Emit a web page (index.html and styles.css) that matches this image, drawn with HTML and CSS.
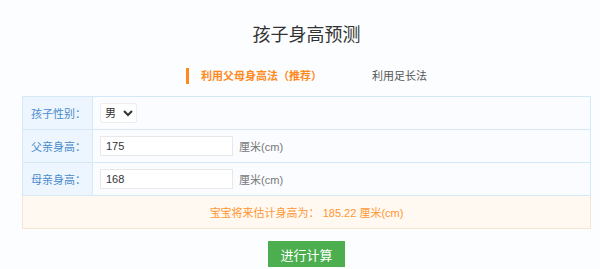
FILE: index.html
```html
<!DOCTYPE html>
<html lang="zh-CN">
  <head>
    <meta charset="UTF-8" />
    <title>孩子身高预测</title>
    <link rel="stylesheet" href="styles.css">
  </head>
  <body>
    <div class="wrap">
      <h1 class="title">孩子身高预测</h1>

      <div class="tabs">
        <span class="tab active">利用父母身高法（推荐）</span>
        <span class="tab">利用足长法</span>
      </div>

      <table class="calc-table">
        <tr>
          <th>孩子性别：</th>
          <td>
            <select class="sex-select">
              <option>男</option>
              <option>女</option>
            </select>
          </td>
        </tr>
        <tr>
          <th>父亲身高：</th>
          <td><input class="num-input" type="text" value="175"> <span class="unit">厘米(cm)</span></td>
        </tr>
        <tr>
          <th>母亲身高：</th>
          <td><input class="num-input" type="text" value="168"> <span class="unit">厘米(cm)</span></td>
        </tr>
        <tr class="result-row">
          <td colspan="2">宝宝将来估计身高为： 185.22 厘米(cm)</td>
        </tr>
      </table>

      <div class="btn-box">
        <button class="calc-btn">进行计算</button>
      </div>
    </div>
  </body>
</html>
```

FILE: styles.css
```css
* {
  box-sizing: border-box;
}

body {
  margin: 0;
  background-color: #fcfdff;
  font-family: "Liberation Sans", "Noto Sans CJK SC", sans-serif;
  color: #333;
}

.wrap {
  width: 569px;
  margin-left: 22px;
}

.title {
  margin: 23px 0 0;
  font-size: 18px;
  line-height: 24px;
  font-weight: normal;
  text-align: center;
  color: #333;
}

.tabs {
  display: flex;
  justify-content: center;
  gap: 50px;
  margin-top: 21px;
  font-size: 11px;
  line-height: 14px;
  color: #555;
}

.tab {
  padding: 1px 0;
}

.tab.active {
  color: #ff8a1c;
  font-weight: bold;
  border-left: 3px solid #ff8a1c;
  padding-left: 12px;
}

.calc-table {
  width: 100%;
  margin-top: 12px;
  border-collapse: collapse;
  font-size: 11px;
  background-color: #fafcff;
}

.calc-table th,
.calc-table td {
  height: 33px;
  border: 1px solid #d5e8f6;
  padding: 0;
}

.calc-table th {
  width: 70px;
  padding-left: 8px;
  text-align: left;
  font-weight: normal;
  color: #4a8acb;
  background-color: #edf6fe;
}

.calc-table td {
  padding-left: 7px;
}

.sex-select {
  width: 37px;
  height: 20px;
  font-family: inherit;
  font-size: 11px;
  color: #333;
  background-color: #fff;
  border: 1px solid #eee;
  border-radius: 2px;
  vertical-align: middle;
}

.num-input {
  width: 133px;
  height: 20px;
  padding: 0 5px;
  font-family: inherit;
  font-size: 11px;
  color: #333;
  background-color: #fff;
  border: 1px solid #e8e8e8;
  vertical-align: middle;
}

.unit {
  margin-left: 3px;
  color: #777;
  vertical-align: middle;
}

.result-row td {
  text-align: center;
  padding-left: 0;
  color: #ff9632;
  background-color: #fff9f2;
  border-color: #f4e6d2;
}

.btn-box {
  display: flex;
  justify-content: center;
  margin-top: 12px;
}

.calc-btn {
  width: 77px;
  height: 26px;
  border: none;
  background-color: #4cae4f;
  color: #fff;
  font-family: inherit;
  font-size: 13px;
  cursor: pointer;
}
```
